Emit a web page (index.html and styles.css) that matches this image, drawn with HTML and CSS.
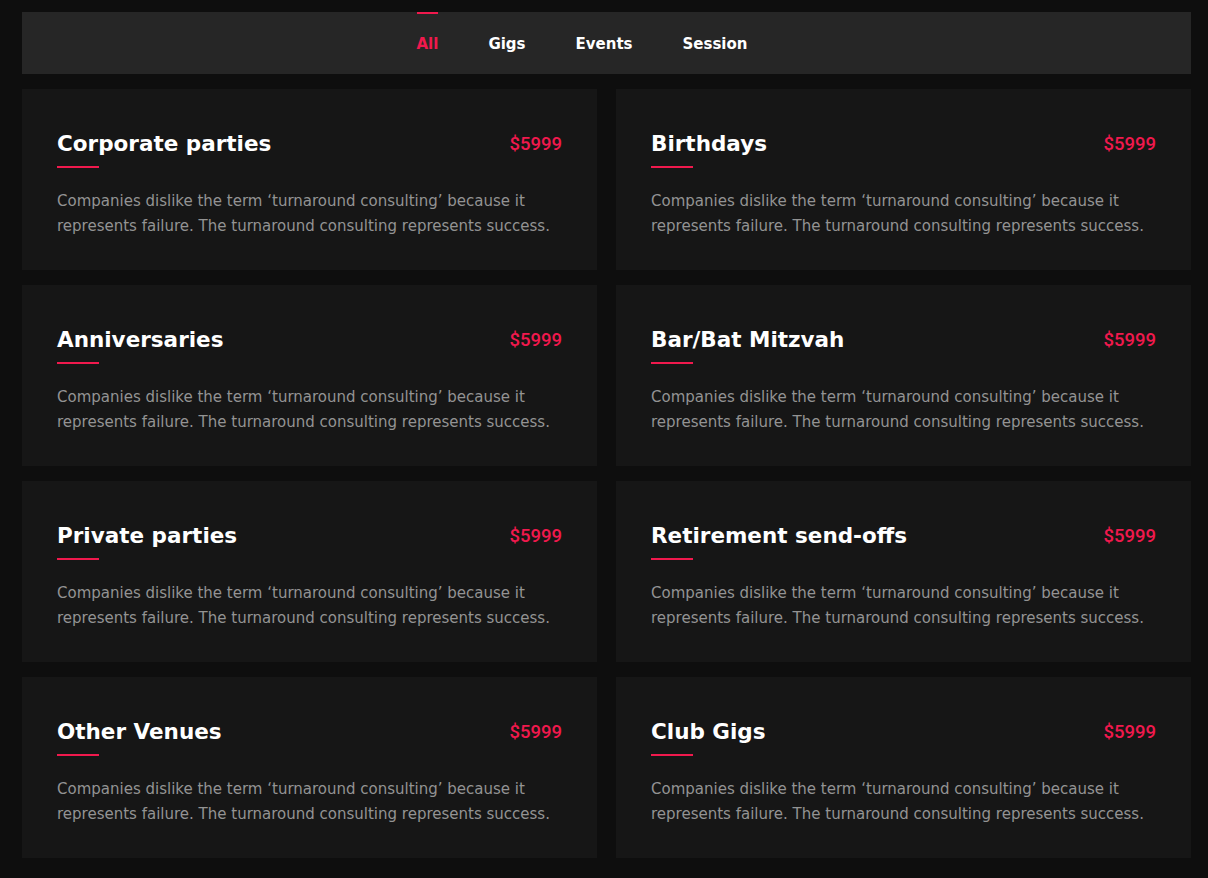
FILE: index.html
```html
<!DOCTYPE html>
<html lang="en">
<head>
<meta charset="utf-8">
<title>Services</title>
<link rel="stylesheet" href="styles.css">
</head>
<body>
<div class="page">
  <nav class="filter">
    <ul class="filter-list">
      <li class="filter-item active">All</li>
      <li class="filter-item">Gigs</li>
      <li class="filter-item">Events</li>
      <li class="filter-item">Session</li>
    </ul>
  </nav>
  <div class="grid">
    <div class="card"><div class="card-head"><h3 class="card-title">Corporate parties</h3><span class="price">$5999</span></div><div class="rule"></div><p class="card-text">Companies dislike the term ‘turnaround consulting’ because it represents failure. The turnaround consulting represents success.</p></div>
    <div class="card"><div class="card-head"><h3 class="card-title">Birthdays</h3><span class="price">$5999</span></div><div class="rule"></div><p class="card-text">Companies dislike the term ‘turnaround consulting’ because it represents failure. The turnaround consulting represents success.</p></div>
    <div class="card"><div class="card-head"><h3 class="card-title">Anniversaries</h3><span class="price">$5999</span></div><div class="rule"></div><p class="card-text">Companies dislike the term ‘turnaround consulting’ because it represents failure. The turnaround consulting represents success.</p></div>
    <div class="card"><div class="card-head"><h3 class="card-title">Bar/Bat Mitzvah</h3><span class="price">$5999</span></div><div class="rule"></div><p class="card-text">Companies dislike the term ‘turnaround consulting’ because it represents failure. The turnaround consulting represents success.</p></div>
    <div class="card"><div class="card-head"><h3 class="card-title">Private parties</h3><span class="price">$5999</span></div><div class="rule"></div><p class="card-text">Companies dislike the term ‘turnaround consulting’ because it represents failure. The turnaround consulting represents success.</p></div>
    <div class="card"><div class="card-head"><h3 class="card-title">Retirement send-offs</h3><span class="price">$5999</span></div><div class="rule"></div><p class="card-text">Companies dislike the term ‘turnaround consulting’ because it represents failure. The turnaround consulting represents success.</p></div>
    <div class="card"><div class="card-head"><h3 class="card-title">Other Venues</h3><span class="price">$5999</span></div><div class="rule"></div><p class="card-text">Companies dislike the term ‘turnaround consulting’ because it represents failure. The turnaround consulting represents success.</p></div>
    <div class="card"><div class="card-head"><h3 class="card-title">Club Gigs</h3><span class="price">$5999</span></div><div class="rule"></div><p class="card-text">Companies dislike the term ‘turnaround consulting’ because it represents failure. The turnaround consulting represents success.</p></div>
  </div>
</div>
</body>
</html>
```
FILE: styles.css
```css
html, body {
  margin: 0;
  padding: 0;
  background: #0e0e0e;
}
body {
  font-family: "DejaVu Sans", "Open Sans", sans-serif;
}
.page {
  padding: 12px 17px 20px 22px;
}
.filter {
  background: #262626;
  height: 62px;
  display: flex;
  justify-content: center;
  padding-right: 49px;
}
.filter-list {
  list-style: none;
  margin: 0;
  padding: 0;
  display: flex;
  gap: 50px;
  align-items: flex-start;
}
.filter-item {
  position: relative;
  color: #ffffff;
  font-weight: bold;
  font-size: 15px;
  height: 61px;
  padding-top: 1px;
  line-height: 62px;
}
.filter-item.active {
  color: #f0194d;
}
.filter-item.active::before {
  content: "";
  position: absolute;
  left: 0;
  right: 0;
  top: 0;
  height: 2px;
  background: #f0194d;
}
.grid {
  margin-top: 15px;
  display: grid;
  grid-template-columns: 575px 575px;
  column-gap: 19px;
  row-gap: 15px;
}
.card {
  background: #161616;
  height: 181px;
  box-sizing: border-box;
  padding: 42px 35px 0 35px;
}
.card-head {
  display: flex;
  justify-content: space-between;
  align-items: center;
}
.card-title {
  margin: 0;
  color: #ffffff;
  font-size: 21.5px;
  font-weight: bold;
  line-height: 26px;
}
.price {
  font-family: Roboto, "Liberation Sans", sans-serif;
  font-weight: 500;
  color: #f0194d;
  font-size: 18.5px;
}
.rule {
  width: 42px;
  height: 2px;
  background: #f0194d;
  margin-top: 9px;
}
.card-text {
  margin: 21px 0 0;
  color: #939393;
  font-size: 15px;
  line-height: 25px;
  max-width: 500px;
}
```
